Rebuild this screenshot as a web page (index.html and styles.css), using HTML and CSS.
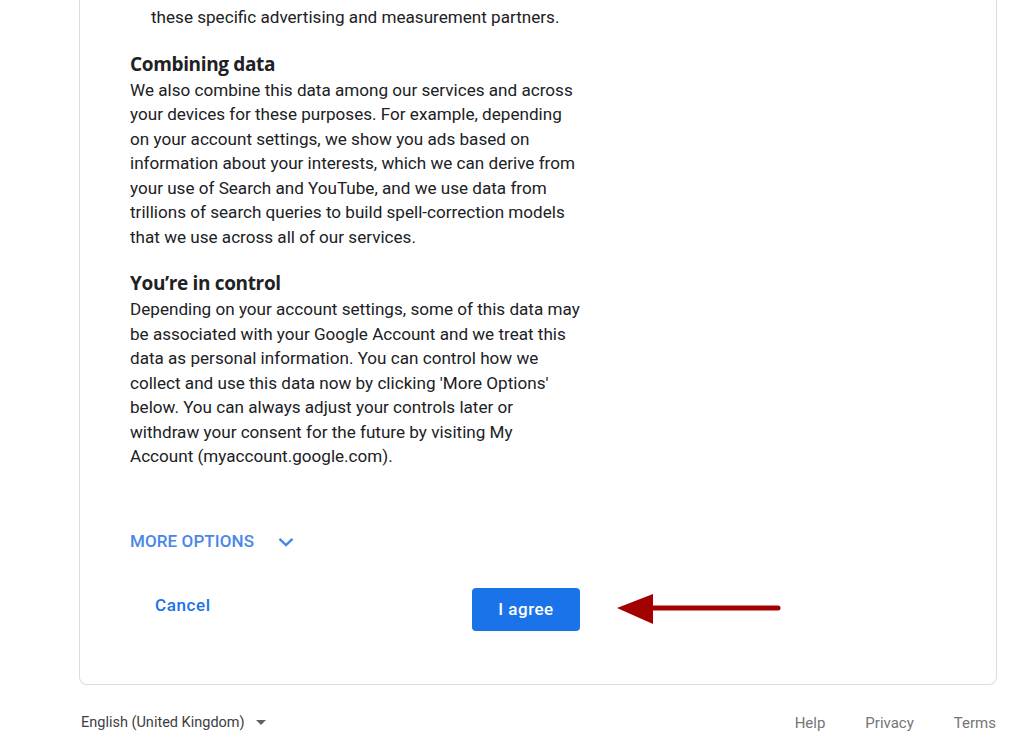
FILE: index.html
```html
<!DOCTYPE html>
<html lang="en">
<head>
<meta charset="utf-8">
<title>Before you continue</title>
<link rel="stylesheet" href="styles.css">
</head>
<body>
<div class="page">
  <div class="card">
    <div class="content">
      <p class="list-tail">these specific advertising and measurement partners.</p>

      <section class="section">
        <h2 class="heading">Combining data</h2>
        <p class="para">We also combine this data among our services and across your devices for these purposes. For example, depending on your account settings, we show you ads based on information about your interests, which we can derive from your use of Search and YouTube, and we use data from trillions of search queries to build spell-correction models that we use across all of our services.</p>
      </section>

      <section class="section">
        <h2 class="heading">You’re in control</h2>
        <p class="para">Depending on your account settings, some of this data may be associated with your Google Account and we treat this data as personal information. You can control how we collect and use this data now by clicking 'More Options' below. You can always adjust your controls later or withdraw your consent for the future by visiting My Account (myaccount.google.com).</p>
      </section>

      <div class="more">
        <span class="more-label">MORE OPTIONS</span>
        <svg class="chevron" width="16" height="10" viewBox="0 0 16 10"><path d="M1.5 1.8 L8 8 L14.5 1.8" fill="none" stroke="#4a86e8" stroke-width="2.4"/></svg>
      </div>

      <div class="actions">
        <button class="btn-text">Cancel</button>
        <button class="btn-primary">I agree</button>
        <svg class="annot-arrow" width="170" height="36" viewBox="0 0 170 36"><path d="M36 17 H163" stroke="#a30000" stroke-width="5" stroke-linecap="round" fill="none"/><polygon points="2,17 38,3 38,33" fill="#a30000"/></svg>
      </div>
    </div>
  </div>

  <footer class="footer">
    <div class="lang">
      <span>English (United Kingdom)</span>
      <svg class="caret" width="10" height="5" viewBox="0 0 10 5"><polygon points="0,0 10,0 5,5" fill="#5f6368"/></svg>
    </div>
    <nav class="links">
      <a class="link">Help</a>
      <a class="link">Privacy</a>
      <a class="link">Terms</a>
    </nav>
  </footer>
</div>
</body>
</html>
```

FILE: styles.css
```css
html, body {
  margin: 0;
  padding: 0;
  background: #ffffff;
}

body {
  font-family: Roboto, "Liberation Sans", Arial, sans-serif;
  color: #202124;
  overflow: hidden;
}

.page {
  margin-left: 79px;
  width: 918px;
}

.card {
  border: 1px solid #dadce0;
  border-top: none;
  border-radius: 0 0 8px 8px;
  padding: 5px 0 53px 50px;
}

.content {
  width: 450px;
}

.list-tail {
  margin: 0 0 0 21px;
  font-size: 17.1px;
  line-height: 24.5px;
}

.section {
  margin-top: 20px;
}

.heading {
  margin: 0;
  font-family: "Open Sans", Roboto, sans-serif;
  font-weight: 700;
  font-size: 19px;
  line-height: 28px;
  letter-spacing: -0.35px;
  color: #202124;
}

.para {
  margin: 0;
  font-size: 17.1px;
  line-height: 24.5px;
}

.more {
  margin-top: 60px;
  display: flex;
  align-items: center;
  height: 24px;
  gap: 24px;
}

.more-label {
  font-size: 17px;
  font-weight: 500;
  color: #4a86e8;
  letter-spacing: 0.1px;
}

.chevron {
  margin-top: 3px;
}

.actions {
  position: relative;
  margin-top: 34px;
  display: flex;
  justify-content: space-between;
  align-items: flex-start;
}

.btn-text {
  border: none;
  background: none;
  padding: 0 0 0 25px;
  height: 36px;
  font-family: Roboto, sans-serif;
  font-size: 17px;
  font-weight: 500;
  letter-spacing: 0.6px;
  color: #1a73e8;
}

.btn-primary {
  margin-top: 1px;
  border: none;
  border-radius: 4px;
  background: #1a73e8;
  color: #ffffff;
  width: 108px;
  height: 43px;
  font-family: Roboto, sans-serif;
  font-size: 17px;
  font-weight: 500;
  letter-spacing: 0.5px;
}

.annot-arrow {
  position: absolute;
  left: 485px;
  top: 4px;
}

.footer {
  margin-top: 28px;
  display: flex;
  justify-content: space-between;
  align-items: center;
  height: 20px;
  font-size: 15px;
}

.lang {
  margin-left: 2px;
  display: flex;
  align-items: center;
  gap: 11px;
  color: #3c4043;
  font-size: 14.5px;
}

.links {
  display: flex;
  gap: 40px;
  margin-right: 1px;
}

.link {
  color: #757575;
  text-decoration: none;
}
```
